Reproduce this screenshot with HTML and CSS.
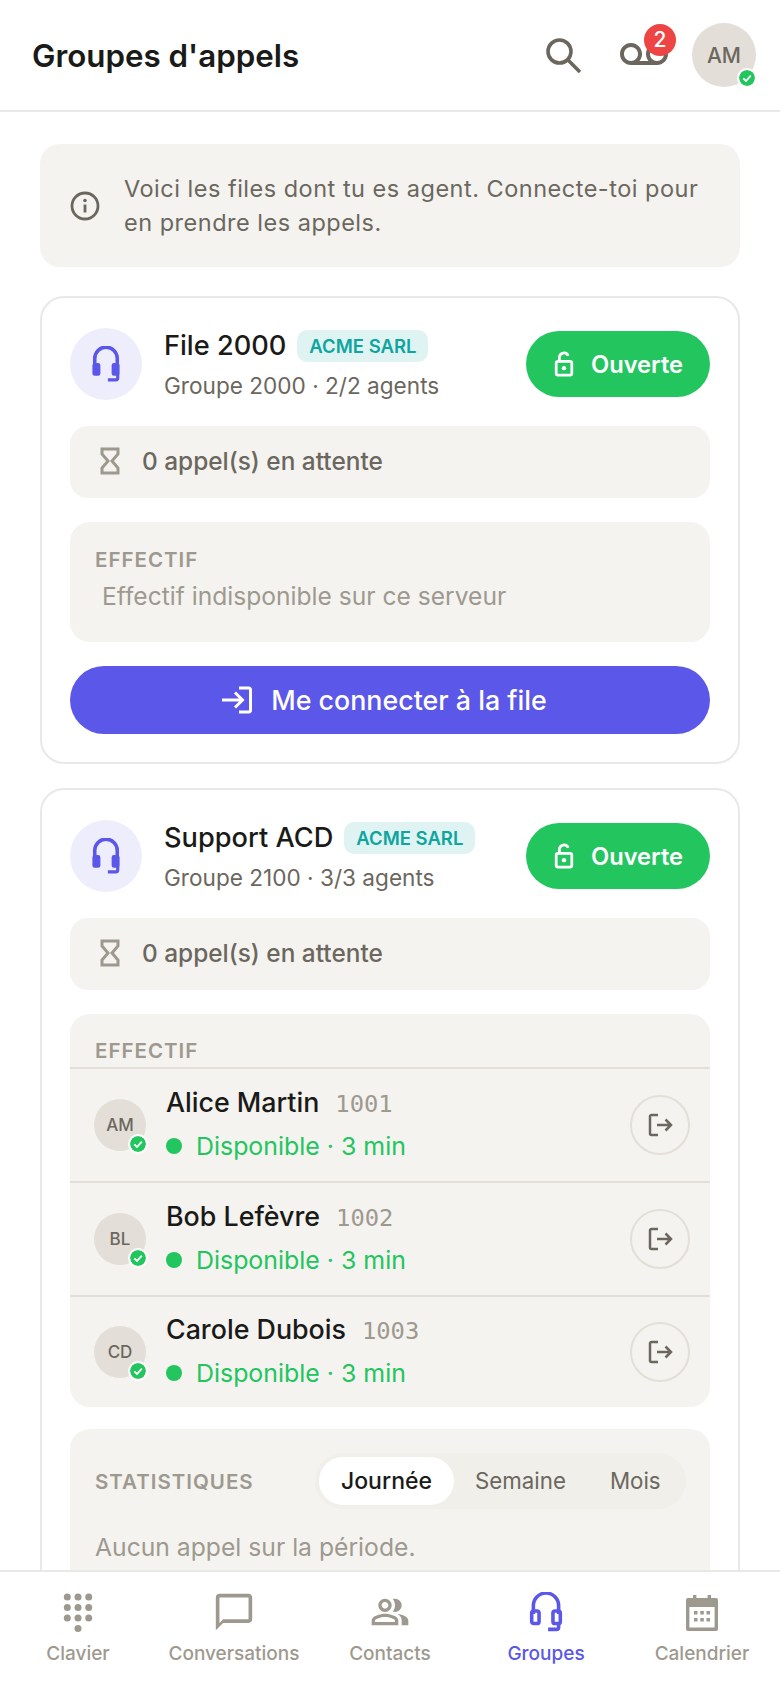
FILE: index.html
```html
<!DOCTYPE html>
<html lang="fr">
<head>
	<title>Groupes d'appels</title>
	<meta charset="utf-8">
	<meta name="viewport" content="width=device-width, initial-scale=1">
	<link rel="stylesheet" href="styles.css">
</head>
<body>
	<svg class="sprite" width="0" height="0">
		<symbol id="i-headset" viewBox="0 0 32 38">
			<path d="M4 21V13a12 12 0 0 1 24 0v8" fill="none" stroke="currentColor" stroke-width="3.4"/>
			<rect x="2.4" y="18" width="7" height="12" rx="2" fill="none" stroke="currentColor" stroke-width="3.4"/>
			<rect x="22.6" y="18" width="7" height="12" rx="2" fill="none" stroke="currentColor" stroke-width="3.4"/>
			<path d="M28 29v4.500a2 2 0 0 1-2 2h-8" fill="none" stroke="currentColor" stroke-width="3.4"/>
		</symbol>
		<symbol id="i-solid-headset" viewBox="0 0 32 38">
			<path d="M4 21V13a12 12 0 0 1 24 0v8" fill="none" stroke="currentColor" stroke-width="3.8"/>
			<rect x="1.500" y="18" width="8.500" height="13.500" rx="2.500" fill="currentColor"/>
			<rect x="22" y="18" width="8.500" height="13.500" rx="2.500" fill="currentColor"/>
			<path d="M28.500 30v4a2 2 0 0 1-2 2H18" fill="none" stroke="currentColor" stroke-width="3.400"/>
		</symbol>
		<symbol id="i-lock" viewBox="0 0 24 28">
			<path d="M7 11V7a5 5 0 0 1 9.600-2" fill="none" stroke="currentColor" stroke-width="3"/>
			<rect x="3.500" y="11" width="17" height="15" rx="2" fill="none" stroke="currentColor" stroke-width="3"/>
			<circle cx="12" cy="18.500" r="2.400" fill="currentColor"/>
		</symbol>
		<symbol id="i-hourglass" viewBox="0 0 20 28">
			<path d="M2 2h16v5l-6 7 6 7v5H2v-5l6-7-6-7z" fill="none" stroke="currentColor" stroke-width="3"/>
		</symbol>
		<symbol id="i-logout" viewBox="0 0 28 28">
			<path d="M12 4H5.500a1.500 1.500 0 0 0-1.500 1.500v17A1.500 1.500 0 0 0 5.500 24H12M11 14h14M19.500 8.500 25 14l-5.500 5.500" fill="none" stroke="currentColor" stroke-width="2.500"/>
		</symbol>
		<symbol id="i-check" viewBox="0 0 16 16">
			<circle cx="8" cy="8" r="8" fill="#22c55e"/>
			<path d="M4.300 8.300 7 11l4.800-5.400" fill="none" stroke="#fff" stroke-width="1.800"/>
		</symbol>
	</svg>

	<header class="topbar">
		<h1 class="page-title">Groupes d'appels</h1>
		<svg class="icon-search" viewBox="0 0 36 36"><circle cx="14.500" cy="14.500" r="11.500" fill="none" stroke="currentColor" stroke-width="3.600"/><path d="M23 23 35 35" fill="none" stroke="currentColor" stroke-width="3.600"/></svg>
		<div class="voicemail">
			<svg class="icon-voicemail" viewBox="0 0 24 24"><path fill="currentColor" d="M18.5 6C15.46 6 13 8.46 13 11.5c0 1.33.47 2.55 1.26 3.5H9.74c.79-.95 1.26-2.17 1.26-3.5C11 8.46 8.54 6 5.5 6S0 8.46 0 11.5 2.46 17 5.5 17h13c3.04 0 5.500-2.460 5.500-5.500S21.540 6 18.500 6zm-13 9C3.570 15 2 13.430 2 11.500S3.570 8 5.500 8 9 9.570 9 11.500 7.430 15 5.500 15zm13 0c-1.930 0-3.500-1.570-3.500-3.500S16.570 8 18.500 8 22 9.570 22 11.500 20.430 15 18.500 15z"/></svg>
			<span class="count">2</span>
		</div>
		<div class="avatar avatar-big">AM<svg class="presence"><use href="#i-check"/></svg></div>
	</header>

	<main class="content">
		<div class="notice">
			<svg class="icon-info" viewBox="0 0 30 30"><circle cx="15" cy="15" r="13" fill="none" stroke="currentColor" stroke-width="2.800"/><circle cx="15" cy="9.500" r="1.800" fill="currentColor"/><path d="M15 13.500v8" stroke="currentColor" stroke-width="2.800"/></svg>
			<p>Voici les files dont tu es agent. Connecte-toi pour en prendre les appels.</p>
		</div>

		<section class="queue">
			<div class="queue-head">
				<div class="queue-icon"><svg><use href="#i-solid-headset"/></svg></div>
				<div class="queue-info">
					<div class="queue-name"><strong>File 2000</strong><span class="tag">ACME SARL</span></div>
					<div class="queue-sub">Groupe 2000 · 2/2 agents</div>
				</div>
				<div class="status"><svg><use href="#i-lock"/></svg>Ouverte</div>
			</div>
			<div class="waiting"><svg><use href="#i-hourglass"/></svg>0 appel(s) en attente</div>
			<div class="panel panel-empty">
				<div class="panel-label">EFFECTIF</div>
				<div class="panel-note">Effectif indisponible sur ce serveur</div>
			</div>
			<button class="join"><svg viewBox="0 0 32 28"><path d="M18 2h10a1.500 1.500 0 0 1 1.500 1.500v21A1.500 1.500 0 0 1 28 26H18M1 14h20M14 6.500 21.500 14 14 21.500" fill="none" stroke="currentColor" stroke-width="3"/></svg>Me connecter à la file</button>
		</section>

		<section class="queue">
			<div class="queue-head">
				<div class="queue-icon"><svg><use href="#i-solid-headset"/></svg></div>
				<div class="queue-info">
					<div class="queue-name"><strong>Support ACD</strong><span class="tag">ACME SARL</span></div>
					<div class="queue-sub">Groupe 2100 · 3/3 agents</div>
				</div>
				<div class="status"><svg><use href="#i-lock"/></svg>Ouverte</div>
			</div>
			<div class="waiting"><svg><use href="#i-hourglass"/></svg>0 appel(s) en attente</div>
			<div class="panel">
				<div class="panel-label panel-label-list">EFFECTIF</div>
				<div class="agent">
					<div class="avatar">AM<svg class="presence"><use href="#i-check"/></svg></div>
					<div class="agent-info">
						<div class="agent-name">Alice Martin<span class="ext">1001</span></div>
						<div class="agent-state"><i class="dot"></i>Disponible · 3 min</div>
					</div>
					<div class="agent-out"><svg><use href="#i-logout"/></svg></div>
				</div>
				<div class="agent">
					<div class="avatar">BL<svg class="presence"><use href="#i-check"/></svg></div>
					<div class="agent-info">
						<div class="agent-name">Bob Lefèvre<span class="ext">1002</span></div>
						<div class="agent-state"><i class="dot"></i>Disponible · 3 min</div>
					</div>
					<div class="agent-out"><svg><use href="#i-logout"/></svg></div>
				</div>
				<div class="agent">
					<div class="avatar">CD<svg class="presence"><use href="#i-check"/></svg></div>
					<div class="agent-info">
						<div class="agent-name">Carole Dubois<span class="ext">1003</span></div>
						<div class="agent-state"><i class="dot"></i>Disponible · 3 min</div>
					</div>
					<div class="agent-out"><svg><use href="#i-logout"/></svg></div>
				</div>
			</div>
			<div class="panel panel-stats">
				<div class="stats-head">
					<div class="panel-label">STATISTIQUES</div>
					<div class="tabs">
						<span class="tab tab-on">Journée</span>
						<span class="tab">Semaine</span>
						<span class="tab tab-last">Mois</span>
					</div>
				</div>
				<div class="stats-note">Aucun appel sur la période.</div>
			</div>
		</section>
	</main>

	<nav class="tabbar">
		<div class="nav-item">
			<svg viewBox="0 0 40 40"><g fill="currentColor"><circle cx="9.300" cy="5" r="3.500"/><circle cx="20" cy="5" r="3.500"/><circle cx="30.700" cy="5" r="3.500"/><circle cx="9.300" cy="15.500" r="3.500"/><circle cx="20" cy="15.500" r="3.500"/><circle cx="30.700" cy="15.500" r="3.500"/><circle cx="9.300" cy="26" r="3.500"/><circle cx="20" cy="26" r="3.500"/><circle cx="30.700" cy="26" r="3.500"/><circle cx="20" cy="36.500" r="3.500"/></g></svg>
			<span>Clavier</span>
		</div>
		<div class="nav-item">
			<svg viewBox="1 1 22 22"><path fill="currentColor" d="M20 2H4c-1.100 0-2 .9-2 2v18l4-4h14c1.100 0 2-.9 2-2V4c0-1.100-.9-2-2-2zm0 14H6l-2 2V4h16v12z"/></svg>
			<span>Conversations</span>
		</div>
		<div class="nav-item">
			<svg viewBox="0 0 24 24"><g fill="currentColor"><path d="M16.670 13.130C18.040 14.060 19 15.320 19 17v3h4v-3C23 14.820 19.430 13.530 16.670 13.130z"/><path d="M15 12c2.210 0 4-1.790 4-4 0-2.210-1.790-4-4-4-.47 0-.91.1-1.330.24C14.500 5.270 15 6.580 15 8s-.5 2.730-1.330 3.760C14.090 11.900 14.530 12 15 12z"/><path d="M9 12c2.210 0 4-1.790 4-4 0-2.210-1.790-4-4-4S5 5.790 5 8c0 2.210 1.790 4 4 4zM9 6c1.100 0 2 .9 2 2 0 1.100-.9 2-2 2S7 9.100 7 8C7 6.900 7.900 6 9 6z"/><path d="M9 13c-2.670 0-8 1.340-8 4v3h16v-3C17 14.340 11.670 13 9 13zM15 18H3l0-.99C3.200 16.290 6.300 15 9 15s5.800 1.290 6 2V18z"/></g></svg>
			<span>Contacts</span>
		</div>
		<div class="nav-item nav-on">
			<svg viewBox="0 0 32 38"><use href="#i-headset"/></svg>
			<span>Groupes</span>
		</div>
		<div class="nav-item">
			<svg viewBox="0 0 40 40"><g fill="currentColor"><rect x="11" y="3" width="3.400" height="6"/><rect x="25.600" y="3" width="3.400" height="6"/><path fill-rule="evenodd" d="M6 6h28a2 2 0 0 1 2 2v29a2 2 0 0 1-2 2H6a2 2 0 0 1-2-2V8a2 2 0 0 1 2-2zm1.400 9v20.600h25.200V15z"/><rect x="12" y="19" width="3.500" height="3.500"/><rect x="18.300" y="19" width="3.500" height="3.500"/><rect x="24.500" y="19" width="3.500" height="3.500"/><rect x="12" y="26" width="3.500" height="3.500"/><rect x="18.300" y="26" width="3.500" height="3.500"/><rect x="24.500" y="26" width="3.500" height="3.500"/></g></svg>
			<span>Calendrier</span>
		</div>
	</nav>
</body>
</html>
```

FILE: styles.css
```css
* { box-sizing: border-box; }

html, body { height: 100%; }

body
{
	margin: 0;
	height: 1688px;
	overflow: hidden;
	display: flex;
	flex-direction: column;
	background: #fff;
	color: #1a1a18;
	font-family: Inter, Roboto, sans-serif;
}

.sprite { position: absolute; }

/* top bar */
.topbar
{
	flex: none;
	height: 112px;
	display: flex;
	align-items: center;
	padding: 0 24px 0 32px;
	border-bottom: 2px solid #e8e8e6;
}

.page-title
{
	flex: 1;
	margin: 2px 0 0;
	font-size: 31.300px;
	font-weight: 600;
}

.icon-search { width: 36px; height: 36px; color: #6b675e; margin-right: 39px; }

.voicemail { position: relative; width: 48px; height: 48px; margin-right: 24px; color: #6b675e; }

.icon-voicemail { width: 48px; height: 48px; display: block; }

.count
{
	position: absolute;
	top: -7px;
	left: 24px;
	width: 32px;
	height: 32px;
	border-radius: 50%;
	background: #ef4444;
	color: #fff;
	font-size: 21px;
	font-weight: 500;
	line-height: 32px;
	text-align: center;
}

.avatar
{
	position: relative;
	flex: none;
	width: 52px;
	height: 52px;
	border-radius: 50%;
	background: #e3dfd8;
	color: #6b675e;
	font-size: 17px;
	font-weight: 500;
	display: flex;
	align-items: center;
	justify-content: center;
}

.avatar-big { width: 64px; height: 64px; font-size: 21px; }

.presence
{
	position: absolute;
	right: -2px;
	bottom: -3px;
	width: 20px;
	height: 20px;
	border-radius: 50%;
	background: #fff;
	padding: 2px;
}

.avatar-big .presence { right: -1px; bottom: -1px; }

/* content */
.content
{
	flex: 1;
	min-height: 0;
	overflow: hidden;
	padding: 32px 40px 0;
	display: flex;
	flex-direction: column;
	gap: 24px;
}

.notice
{
	flex: none;
	height: 123px;
	margin-bottom: 5px;
	display: flex;
	align-items: center;
	gap: 24px;
	padding: 0 32px 0 30px;
	background: #f4f3ef;
	border-radius: 20px;
	color: #6b675e;
	font-size: 23.500px;
	letter-spacing: 0.5px;
	line-height: 34px;
}

.notice p { margin: 0; }

.icon-info { flex: none; width: 30px; height: 30px; }

.queue
{
	flex: none;
	display: flex;
	flex-direction: column;
	gap: 24px;
	padding: 30px 28px 28px;
	border: 2px solid #e8e8e6;
	border-radius: 24px;
}

.queue-head { display: flex; align-items: center; gap: 22px; margin-bottom: 2px; }

.queue-icon
{
	flex: none;
	width: 72px;
	height: 72px;
	border-radius: 50%;
	background: #eeedfc;
	color: #5b57e8;
	display: flex;
	align-items: center;
	justify-content: center;
}

.queue-icon svg { width: 30px; height: 36px; }

.queue-info { flex: 1; min-width: 0; }

.queue-name { display: flex; align-items: center; gap: 11px; font-size: 27.200px; }

.queue-name strong { font-weight: 500; }

.tag
{
	height: 32px;
	padding: 0 12px;
	border-radius: 10px;
	background: #dff3f3;
	color: #0ea5a0;
	font-size: 18.500px;
	font-weight: 600;
	line-height: 32px;
}

.queue-sub { margin-top: 10px; color: #6b675e; font-size: 22.600px; }

.status
{
	flex: none;
	width: 184px;
	height: 66px;
	border-radius: 33px;
	background: #22c55e;
	color: #fff;
	font-size: 23.700px;
	font-weight: 600;
	display: flex;
	align-items: center;
	justify-content: center;
	gap: 16px;
}

.status svg { width: 22px; height: 26px; }

.waiting
{
	height: 72px;
	display: flex;
	align-items: center;
	gap: 22px;
	padding: 0 30px 2px;
	border-radius: 18px;
	background: #f4f3ef;
	color: #6b675e;
	font-size: 24.400px;
	font-weight: 500;
}

.waiting svg { width: 20px; height: 28px; color: #9e998f; }

.panel { background: #f4f3ef; border-radius: 20px; }

.panel-empty { height: 120px; padding: 25px 25px 0; }

.panel-label { color: #9e998f; font-size: 20.500px; font-weight: 600; letter-spacing: 1px; }

.panel-label-list { padding: 27px 25px 7px; line-height: 19px; }

.panel-note { margin-top: 9px; padding-left: 7px; color: #9e998f; font-size: 24.600px; }

.join
{
	height: 68px;
	padding: 0 12px 0 0;
	border: none;
	border-radius: 34px;
	background: #5b57e8;
	color: #fff;
	font-family: inherit;
	font-size: 26.800px;
	font-weight: 500;
	display: flex;
	align-items: center;
	justify-content: center;
	gap: 18px;
}

.join svg { width: 32px; height: 28px; }

/* agents */
.agent
{
	height: 114px;
	display: flex;
	align-items: center;
	padding: 0 20px 0 24px;
	border-top: 2px solid #e3dfd8;
}

.agent:last-child { height: 112px; }

.agent-info { flex: 1; margin-left: 20px; padding-bottom: 2px; }

.agent-name { font-size: 26.800px; font-weight: 500; line-height: 31px; }

.ext
{
	margin-left: 16px;
	color: #9e998f;
	font-family: "DejaVu Sans Mono", monospace;
	font-size: 23.800px;
	font-weight: 400;
}

.agent-state
{
	margin-top: 11px;
	display: flex;
	align-items: center;
	gap: 14px;
	color: #22c55e;
	font-size: 24.900px;
}

.dot { width: 16px; height: 16px; border-radius: 50%; background: #22c55e; }

.agent-out
{
	width: 60px;
	height: 60px;
	border: 2px solid #e3dfd8;
	border-radius: 50%;
	color: #6b675e;
	display: flex;
	align-items: center;
	justify-content: center;
}

.agent-out svg { width: 28px; height: 28px; }

/* stats */
.panel-stats { height: 240px; margin-top: -2px; padding: 24px 24px 0 25px; }

.stats-head { display: flex; align-items: center; justify-content: space-between; }

.tabs
{
	display: flex;
	align-items: center;
	width: 371px;
	height: 56px;
	padding: 4px;
	border-radius: 28px;
	background: #f0efea;
	color: #6b675e;
	font-size: 22.300px;
}

.tab { padding: 0 21px; line-height: 48px; }

.tab-last { margin-left: 2px; }

.tab-on { padding: 0 22px; background: #fff; border-radius: 24px; color: #1a1a18; font-size: 23px; font-weight: 500; }

.stats-note { margin-top: 23px; color: #9e998f; font-size: 24.700px; }

/* bottom nav */
.tabbar
{
	flex: none;
	height: 118px;
	display: grid;
	grid-template-columns: repeat(5, 1fr);
	padding-top: 20px;
	border-top: 2px solid #e8e8e6;
	background: #fff;
	color: #9e998f;
	font-size: 19px;
	font-weight: 500;
	text-align: center;
}

.nav-item { display: flex; flex-direction: column; align-items: center; gap: 10px; }

.nav-item svg { width: 40px; height: 40px; }

.nav-on { color: #5b57e8; }
```
